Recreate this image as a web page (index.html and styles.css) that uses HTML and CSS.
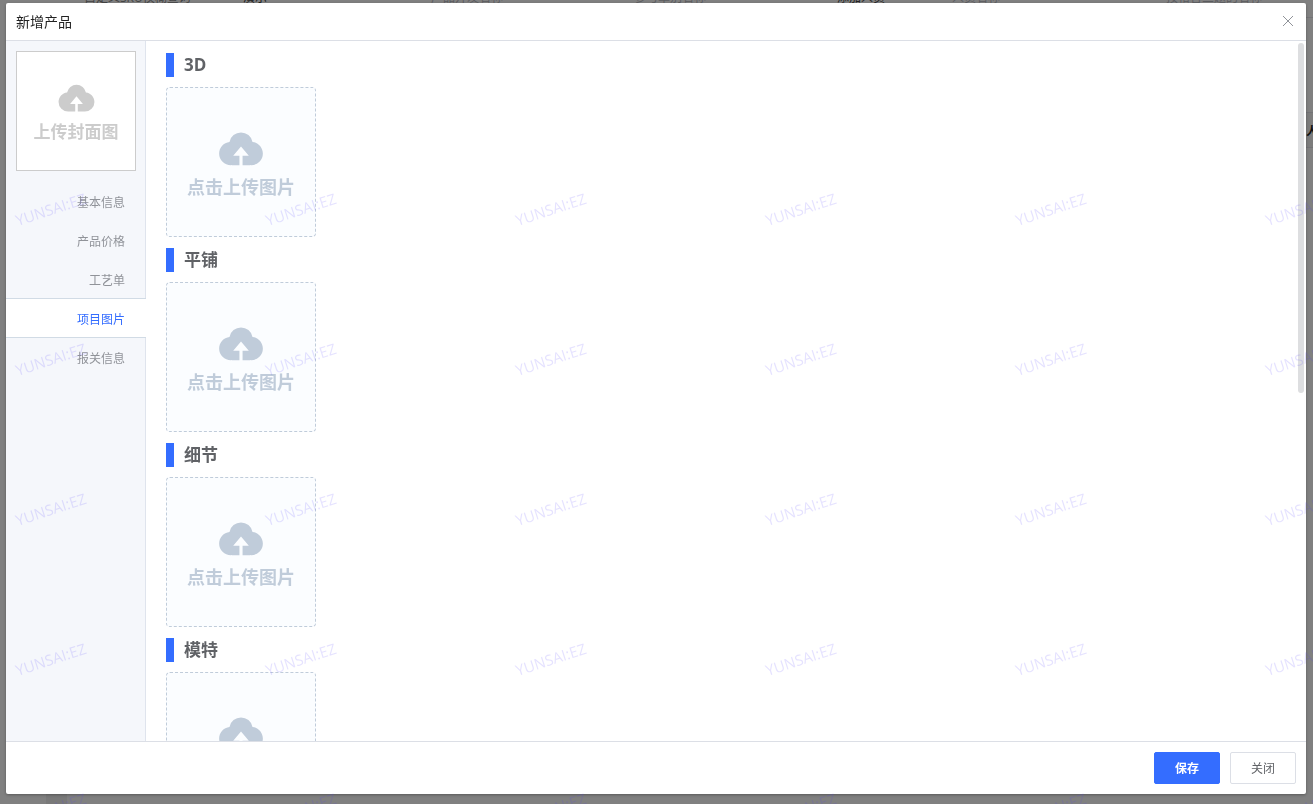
FILE: index.html
```html
<!DOCTYPE html>
<html lang="zh-CN">
<head>
    <meta charset="UTF-8">
    <meta name="viewport" content="width=device-width, initial-scale=1">
    <title>新增产品</title>
    <link rel="stylesheet" href="styles.css">
</head>
<body>
    <svg class="icon-defs" aria-hidden="true">
        <symbol id="icon-upload" viewBox="0 0 1024 1024">
            <path d="M544 864V672h128L512 480 352 672h128v192H320v-1.6c-5.376.32-10.496 1.6-16 1.6A240 240 0 0 1 64 624c0-123.136 93.12-223.488 212.608-237.248A239.808 239.808 0 0 1 512 192a239.872 239.872 0 0 1 235.456 194.752c119.488 13.76 212.48 114.112 212.48 237.248a240 240 0 0 1-240 240c-5.376 0-10.56-1.28-16-1.6v1.6H544z"/>
        </symbol>
        <symbol id="icon-arrow" viewBox="0 0 12 12">
            <path d="M1 3l5 5 5-5"/>
        </symbol>
    </svg>

    <!-- page behind the dialog -->
    <div class="page" aria-hidden="true">
        <div class="filters">
            <span class="filter filter-sku">自定义SKU模糊查询<svg><use href="#icon-arrow"/></svg></span>
            <span class="filter filter-value dark">演示</span>
            <span class="filter">产品开发名称<svg><use href="#icon-arrow"/></svg></span>
            <span class="filter">参与单别名称<svg><use href="#icon-arrow"/></svg></span>
            <span class="filter filter-user dark">添加人员<svg><use href="#icon-arrow"/></svg></span>
            <span class="filter filter-name">人员名称</span>
            <span class="filter filter-last">按格音三题的名称</span>
        </div>
        <div class="page-side">
            <div class="page-column">人</div>
        </div>
        <div class="page-foot"></div>
    </div>

    <div class="overlay">
        <div class="dialog" role="dialog" aria-labelledby="dialog-title">
            <header class="dialog-header">
                <h1 class="dialog-title" id="dialog-title">新增产品</h1>
                <button class="close" type="button" aria-label="关闭窗口">
                    <svg viewBox="0 0 12 12"><path d="M1 1l10 10M11 1L1 11"/></svg>
                </button>
            </header>

            <div class="dialog-body">
                <aside class="sidebar">
                    <button class="upload cover" type="button">
                        <svg><use href="#icon-upload"/></svg>
                        <span>上传封面图</span>
                    </button>
                    <nav class="tabs">
                        <a class="tab" href="#basic">基本信息</a>
                        <a class="tab" href="#price">产品价格</a>
                        <a class="tab" href="#craft">工艺单</a>
                        <a class="tab active" href="#images">项目图片</a>
                        <a class="tab" href="#customs">报关信息</a>
                    </nav>
                </aside>

                <main class="content" id="images">
                    <section class="group">
                        <h2 class="group-title">3D</h2>
                        <button class="upload" type="button">
                            <svg><use href="#icon-upload"/></svg>
                            <span>点击上传图片</span>
                        </button>
                    </section>
                    <section class="group">
                        <h2 class="group-title">平铺</h2>
                        <button class="upload" type="button">
                            <svg><use href="#icon-upload"/></svg>
                            <span>点击上传图片</span>
                        </button>
                    </section>
                    <section class="group">
                        <h2 class="group-title">细节</h2>
                        <button class="upload" type="button">
                            <svg><use href="#icon-upload"/></svg>
                            <span>点击上传图片</span>
                        </button>
                    </section>
                    <section class="group">
                        <h2 class="group-title">模特</h2>
                        <button class="upload" type="button">
                            <svg><use href="#icon-upload"/></svg>
                            <span>点击上传图片</span>
                        </button>
                    </section>
                </main>
                <div class="scroll-thumb"></div>
            </div>

            <footer class="dialog-footer">
                <button class="btn btn-primary" type="button">保存</button>
                <button class="btn" type="button">关闭</button>
            </footer>
        </div>
    </div>

    <div class="watermark" aria-hidden="true">
        <span>YUNSAI:EZ</span><span>YUNSAI:EZ</span><span>YUNSAI:EZ</span><span>YUNSAI:EZ</span><span>YUNSAI:EZ</span><span>YUNSAI:EZ</span>
        <span>YUNSAI:EZ</span><span>YUNSAI:EZ</span><span>YUNSAI:EZ</span><span>YUNSAI:EZ</span><span>YUNSAI:EZ</span><span>YUNSAI:EZ</span>
        <span>YUNSAI:EZ</span><span>YUNSAI:EZ</span><span>YUNSAI:EZ</span><span>YUNSAI:EZ</span><span>YUNSAI:EZ</span><span>YUNSAI:EZ</span>
        <span>YUNSAI:EZ</span><span>YUNSAI:EZ</span><span>YUNSAI:EZ</span><span>YUNSAI:EZ</span><span>YUNSAI:EZ</span><span>YUNSAI:EZ</span>
        <span>YUNSAI:EZ</span><span>YUNSAI:EZ</span><span>YUNSAI:EZ</span><span>YUNSAI:EZ</span><span>YUNSAI:EZ</span><span>YUNSAI:EZ</span>
    </div>
</body>
</html>
```

FILE: styles.css
```css
:root {
    --primary: #346dff;
    --border: #dcdfe6;
    --text: #606266;
    --muted: #909399;
    --upload: #c0ccda;
    --page-bg: #808080;
    --page-line: #737376;
}

* {
    box-sizing: border-box;
}

body {
    margin: 0;
    height: 100vh;
    overflow: hidden;
    background: var(--page-bg);
    font-family: "Open Sans", "Noto Sans CJK SC", sans-serif;
    font-size: 12px;
    color: var(--text);
}

button {
    padding: 0;
    font-family: inherit;
    cursor: pointer;
}

.icon-defs {
    position: absolute;
    width: 0;
    height: 0;
}

/* Page behind the dialog */
.page {
    height: 100vh;
    display: flex;
    flex-direction: column;
}

.filters {
    display: flex;
    align-items: flex-end;
    height: 6px;
    padding-left: 84px;
    overflow: hidden;
    line-height: 16px;
    white-space: nowrap;
    color: #5c5d60;
}

.filter {
    display: flex;
    flex: 0 0 203px;
    align-items: center;
    justify-content: space-between;
    padding-right: 38px;
}

.filter svg {
    width: 12px;
    height: 12px;
    fill: none;
    stroke: #5c5d60;
}

.filter-sku {
    flex-basis: 159px;
    padding-right: 28px;
    color: #444;
}

.filter-value {
    flex-basis: 188px;
}

.filter-user {
    flex-basis: 115px;
    padding-right: 22px;
}

.filter-name {
    flex-basis: 214px;
}

.filter-last {
    flex: 1;
}

.dark {
    color: #222;
}

.page-side {
    align-self: flex-end;
    width: 7px;
    padding-top: 94px;
    margin-top: 11px;
    border-top: 1px solid var(--page-line);
}

.page-column {
    height: 36px;
    border: solid var(--page-line);
    border-width: 1px 0;
    overflow: hidden;
    line-height: 38px;
    font-weight: 700;
    background: #7c7c7c;
    color: #111;
}

.page-foot {
    width: 21px;
    height: 10px;
    margin: auto 0 0 46px;
    background: #797979;
}

/* Dialog */
.overlay {
    position: fixed;
    inset: 0;
    display: flex;
    padding: 3px 7px 10px 6px;
}

.dialog {
    flex: 1;
    display: flex;
    flex-direction: column;
    min-width: 0;
    background: #fff;
    border-radius: 2px;
    box-shadow: 0 1px 3px rgba(0, 0, 0, 0.3);
}

.dialog-header {
    display: flex;
    align-items: center;
    justify-content: space-between;
    height: 38px;
    padding: 0 12px 2px 10px;
    border-bottom: 1px solid var(--border);
}

.dialog-title {
    margin: 0;
    font-size: 14px;
    font-weight: 400;
    color: #222;
}

.close {
    display: flex;
    border: none;
    background: none;
}

.close svg {
    width: 12px;
    height: 12px;
    fill: none;
    stroke: var(--muted);
}

.dialog-body {
    position: relative;
    flex: 1;
    display: flex;
    min-height: 0;
}

.dialog-footer {
    display: flex;
    justify-content: flex-end;
    gap: 10px;
    padding: 10px;
    border-top: 1px solid var(--border);
}

.btn {
    width: 66px;
    height: 32px;
    border: 1px solid var(--border);
    border-radius: 2px;
    background: #fff;
    font-size: 12px;
    color: var(--text);
}

.btn-primary {
    border-color: var(--primary);
    background: var(--primary);
    font-weight: 700;
    color: #fff;
}

/* Sidebar */
.sidebar {
    flex: 0 0 140px;
    padding-top: 10px;
    background: #f5f7fb;
    box-shadow: inset -1px 0 #dfe4ed;
}

.tabs {
    margin-top: 10px;
}

.tab {
    display: block;
    height: 40px;
    margin-bottom: -1px;
    padding-right: 21px;
    border: solid transparent;
    border-width: 1px 0;
    line-height: 42px;
    text-align: right;
    text-decoration: none;
    color: var(--muted);
}

.tab.active {
    border-color: #d1dbe5;
    background: #fff;
    color: var(--primary);
}

/* Upload boxes */
.upload {
    display: flex;
    flex-direction: column;
    align-items: center;
    justify-content: center;
    width: 150px;
    height: 150px;
    border: 1px dashed var(--upload);
    border-radius: 4px;
    background: #fbfdff;
    font-size: 18px;
    font-weight: 700;
    line-height: 28px;
    color: var(--upload);
}

.upload svg {
    width: 50px;
    height: 50px;
    fill: currentColor;
}

.cover {
    width: 120px;
    height: 120px;
    margin-left: 10px;
    border: 1px solid #ccc;
    border-radius: 0;
    background: #fff;
    font-size: 17px;
    color: #ccc;
}

.cover svg {
    width: 41px;
    height: 41px;
}

/* Image groups */
.content {
    flex: 1;
    padding: 12px 20px;
    overflow-y: auto;
    scrollbar-width: none;
}

.group {
    margin-bottom: 11px;
}

.group-title {
    margin: 0 0 10px;
    padding-left: 10px;
    border-left: 8px solid var(--primary);
    font-size: 17px;
    line-height: 24px;
}

.scroll-thumb {
    position: absolute;
    top: 2px;
    right: 2px;
    width: 6px;
    height: 50%;
    border-radius: 3px;
    background: #dddee0;
}

/* Watermark over everything */
.watermark {
    position: fixed;
    inset: 0;
    display: grid;
    grid-template-columns: repeat(6, 250px);
    grid-auto-rows: 150px;
    align-items: center;
    justify-items: start;
    padding: 134px 0 0 14px;
    overflow: hidden;
    pointer-events: none;
    font-size: 15px;
    color: rgba(80, 60, 255, 0.15);
}

.watermark span {
    transform: rotate(-18deg);
}
```
